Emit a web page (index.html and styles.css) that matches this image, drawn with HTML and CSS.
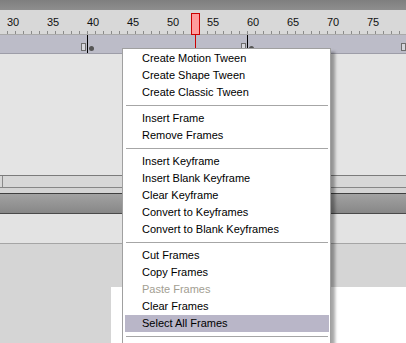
FILE: index.html
```html
<!DOCTYPE html>
<html>
<head>
<meta charset="utf-8">
<title>Timeline context menu</title>
<link rel="stylesheet" href="styles.css">
</head>
<body>
<div class="timeline">
  <div class="topbar"></div>
  <div class="ruler">
    <div class="labels">
      <span>30</span><span>35</span><span>40</span><span>45</span><span>50</span><span>55</span><span>60</span><span>65</span><span>70</span><span>75</span>
    </div>
    <div class="ticks"></div>
  </div>
  <div class="layer">
    <span class="endmark" style="left:81px"></span>
    <span class="bound" style="left:87px"></span>
    <span class="key" style="left:89px"></span>
    <span class="endmark" style="left:241px"></span>
    <span class="bound" style="left:247px"></span>
    <span class="key" style="left:249px"></span>
    <span class="endmark" style="left:401px"></span>
  </div>
  <div class="frames"></div>
  <div class="hscroll"><span class="hs-left"></span></div>
  <div class="gap"></div>
  <div class="titlebar"></div>
  <div class="panel"></div>
  <div class="stage"><div class="paper"></div></div>
  <div class="playhead"><div class="head"></div><div class="line"></div></div>
</div>
<ul class="menu">
  <li>Create Motion Tween</li>
  <li>Create Shape Tween</li>
  <li>Create Classic Tween</li>
  <li class="sep"></li>
  <li>Insert Frame</li>
  <li>Remove Frames</li>
  <li class="sep"></li>
  <li>Insert Keyframe</li>
  <li>Insert Blank Keyframe</li>
  <li>Clear Keyframe</li>
  <li>Convert to Keyframes</li>
  <li>Convert to Blank Keyframes</li>
  <li class="sep"></li>
  <li>Cut Frames</li>
  <li>Copy Frames</li>
  <li class="disabled">Paste Frames</li>
  <li>Clear Frames</li>
  <li class="active">Select All Frames</li>
  <li class="sep"></li>
</ul>
</body>
</html>
```
FILE: styles.css
```css
* { box-sizing: border-box; margin: 0; padding: 0; }
html, body { width: 406px; height: 343px; overflow: hidden; }
body {
  font-family: "Liberation Sans", Arial, sans-serif;
  font-size: 11px;
  background: #d4d4d4;
  position: relative;
}
.timeline { position: relative; }
.topbar { height: 10px; background: linear-gradient(#7f7f7f, #8e8e8e); }
.ruler {
  height: 25px;
  background: #d8d8d8;
  border-bottom: 1px solid #a9a9a9;
  padding-top: 6px;
}
.labels {
  display: flex;
  padding-left: 7px;
  height: 13px;
  line-height: 13px;
  color: #111;
}
.labels span { flex: 0 0 40px; }
.ticks {
  margin: 2px 0 0 7px;
  height: 3px;
  background: repeating-linear-gradient(to right, #8a8a8a 0 1px, transparent 1px 8px);
}
.layer {
  position: relative;
  height: 19px;
  background: #bcbcc8;
  border-bottom: 1px solid #9d9da8;
}
.endmark {
  position: absolute;
  top: 8px;
  width: 5px;
  height: 8px;
  border: 1px solid #6e6e6e;
  background: #d6d6dc;
}
.bound {
  position: absolute;
  top: 0;
  width: 1px;
  height: 18px;
  background: #000;
}
.key {
  position: absolute;
  top: 11px;
  width: 5px;
  height: 5px;
  border-radius: 50%;
  background: #555;
}
.frames { height: 122px; background: #e4e4e4; border-bottom: 1px solid #7b7b7b; }
.hscroll {
  display: flex;
  height: 12px;
  background: #d7d7d7;
  border-bottom: 1px solid #868686;
}
.hs-left { width: 3px; border-right: 1px solid #8a8a8a; }
.gap { height: 5px; background: #d4d4d4; }
.titlebar {
  height: 21px;
  border-top: 1px solid #3e3e3e;
  border-bottom: 1px solid #4a4a4a;
  background: linear-gradient(#a2a2a2, #878787);
}
.panel { height: 30px; background: #e3e3e3; border-bottom: 1px solid #a5a5a5; }
.stage { height: 100px; background: #d5d5d5; padding: 43px 0 0 111px; }
.paper { height: 100%; background: #fff; }
.playhead { position: absolute; left: 191px; top: 13px; width: 9px; }
.head { height: 22px; border: 1px solid #cc0000; background: #ff9c9c; }
.line { width: 1px; height: 140px; margin-left: 4px; background: #cc0000; }
.menu {
  position: absolute;
  left: 122px;
  top: 48px;
  width: 209px;
  list-style: none;
  background: #fff;
  border: 1px solid #a0a0a0;
  border-bottom: 0;
  padding: 1px 1px 2px 2px;
  box-shadow: 4px 4px 3px rgba(0, 0, 0, 0.35);
}
.menu li {
  height: 17px;
  line-height: 17px;
  padding-left: 17px;
  color: #000;
  white-space: nowrap;
}
.menu li.sep {
  height: 9px;
  background: linear-gradient(#a6a6a6, #a6a6a6) no-repeat 1px 4px / calc(100% - 2px) 1px;
}
.menu li.disabled { color: #a29e92; }
.menu li.active { background: #b9b6c8; }
```
